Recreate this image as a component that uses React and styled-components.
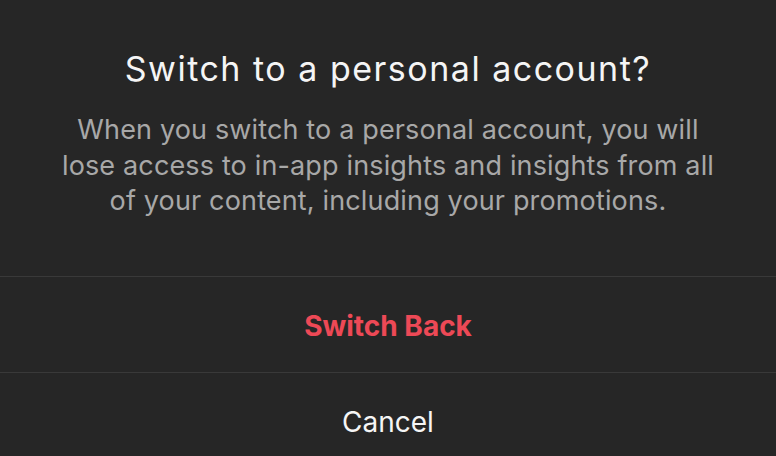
import React from "react";
import styled, { createGlobalStyle } from "styled-components";

const Global = createGlobalStyle`
  html, body { margin: 0; padding: 0; background: #262626; }
  body { font-family: Inter, "Noto Sans", sans-serif; -webkit-font-smoothing: antialiased; }
`;

const Dialog = styled.div`
  width: 776px;
  background: #262626;
  display: flex;
  flex-direction: column;
`;

const Header = styled.div`
  display: flex;
  flex-direction: column;
  align-items: center;
  padding: 49px 16px 57px;
  gap: 23px;
  text-align: center;
`;

const Title = styled.h1`
  margin: 0;
  font-size: 34px;
  line-height: 40px;
  letter-spacing: 1.5px;
  font-weight: 400;
  color: #f5f5f5;
  white-space: nowrap;
`;

const Body = styled.p`
  margin: 0;
  font-size: 27px;
  line-height: 35.5px;
  letter-spacing: 0.15px;
  color: #a8a8a8;
  white-space: nowrap;
`;

const Action = styled.button`
  all: unset;
  box-sizing: border-box;
  height: 96px;
  padding-top: 3px;
  display: flex;
  align-items: center;
  justify-content: center;
  border-top: 1px solid #393939;
  font-family: Inter, "Noto Sans", sans-serif;
  font-size: 28px;
  font-weight: ${(p) => (p.$primary ? 700 : 400)};
  color: ${(p) => (p.$primary ? "#ed4956" : "#f5f5f5")};
  cursor: pointer;
`;

export default function App() {
  return (
    <>
      <Global />
      <Dialog>
        <Header>
          <Title>Switch to a personal account?</Title>
          <Body>
            When you switch to a personal account, you will
            <br />
            lose access to in-app insights and insights from all
            <br />
            of your content, including your promotions.
          </Body>
        </Header>
        <Action $primary>Switch Back</Action>
        <Action>Cancel</Action>
      </Dialog>
    </>
  );
}
